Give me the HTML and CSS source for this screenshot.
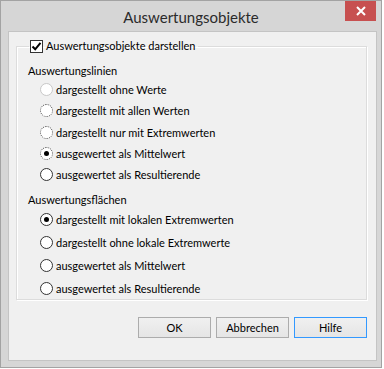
FILE: index.html
```html
<!DOCTYPE html>
<html lang="de">
<head>
  <meta charset="UTF-8">
  <title>Auswertungsobjekte</title>
  <link rel="stylesheet" href="styles.css">
</head>
<body>
  <div class="window">
    <div class="titlebar">
      <span></span>
      <span class="title">Auswertungsobjekte</span>
      <span class="close">
        <svg width="10" height="10" viewBox="0 0 10 10"><path d="M1 1 L9 9 M9 1 L1 9" stroke="#fff" stroke-width="2"/></svg>
      </span>
    </div>

    <div class="client">
      <fieldset class="group">
        <legend>
          <span class="check">
            <svg width="11" height="11" viewBox="0 0 11 11"><path d="M1.5 5.5 L4.2 8.3 L9.5 1.8" fill="none" stroke="#000" stroke-width="2"/></svg>
          </span>
          Auswertungsobjekte darstellen
        </legend>

        <div class="heading">Auswertungslinien</div>
        <ul class="options lines">
          <li><span class="radio faded"></span>dargestellt ohne Werte</li>
          <li><span class="radio dotted"></span>dargestellt mit allen Werten</li>
          <li><span class="radio dotted"></span>dargestellt nur mit Extremwerten</li>
          <li><span class="radio dotted on"></span>ausgewertet als Mittelwert</li>
          <li><span class="radio"></span>ausgewertet als Resultierende</li>
        </ul>

        <div class="heading second">Auswertungsflächen</div>
        <ul class="options areas">
          <li><span class="radio on"></span>dargestellt mit lokalen Extremwerten</li>
          <li><span class="radio"></span>dargestellt ohne lokale Extremwerte</li>
          <li><span class="radio"></span>ausgewertet als Mittelwert</li>
          <li><span class="radio"></span>ausgewertet als Resultierende</li>
        </ul>
      </fieldset>

      <div class="buttons">
        <button>OK</button>
        <button>Abbrechen</button>
        <button class="default">Hilfe</button>
      </div>
    </div>
  </div>
</body>
</html>
```

FILE: styles.css
```css
body {
  margin: 0;
  background: #ffffff;
  font-family: Lato, "Open Sans", sans-serif;
  font-size: 11px;
  color: #000;
}

/* window frame */
.window {
  border: 1px solid #a3a3a3;
  background: #d6d6d6;
  padding: 0 4px 6px 7px;
  width: 369px;
  height: 360px;
}

.titlebar {
  height: 30px;
  display: grid;
  grid-template-columns: 1fr auto 1fr;
  align-items: start;
  margin-left: -7px;
  margin-right: -4px;
}
.title {
  font-size: 15px;
  color: #2b2b2b;
  line-height: 32px;
}
.close {
  justify-self: end;
  margin-right: 5px;
  width: 31px;
  height: 20px;
  background: #c75050;
  display: flex;
  align-items: center;
  justify-content: center;
}

/* client area */
.client {
  background: #f0f0f0;
  border: 1px solid #c4c4c4;
  height: 328px;
  padding: 0 9px 0 7px;
  display: flex;
  flex-direction: column;
}

.group {
  margin: 6px 0 0 0;
  padding: 0 0 14px 11px;
  border: 1px solid #dcdcdc;
  box-shadow: inset 1px 1px 0 #fff, 1px 1px 0 #fff;
  height: 262px;
  box-sizing: border-box;
}
.group legend {
  padding: 0 3px 0 1px;
  margin-left: 1px;
  line-height: 16px;
  display: flex;
  align-items: center;
}
.check {
  width: 11px;
  height: 11px;
  border: 1px solid #333;
  background: #fff;
  margin-right: 3px;
  display: inline-flex;
}

.heading {
  line-height: 17px;
  margin-top: 8px;
}
.heading.second {
  margin-top: 6px;
}

.options {
  list-style: none;
  margin: 0;
  padding: 0 0 0 12px;
}
.options li {
  display: flex;
  align-items: center;
  height: 21.3px;
}
.options.areas li {
  height: 23px;
}

.radio {
  width: 11px;
  height: 11px;
  border-radius: 50%;
  border: 1px solid #333;
  background: #fff;
  margin-right: 3px;
  box-sizing: content-box;
  position: relative;
}
.radio.faded {
  border-color: #c8c8c8;
}
.radio.dotted {
  border: 1px dotted #444;
}
.radio.on::after {
  content: "";
  position: absolute;
  left: 3px;
  top: 3px;
  width: 5px;
  height: 5px;
  border-radius: 50%;
  background: #000;
}

/* dialog buttons */
.buttons {
  display: flex;
  justify-content: flex-end;
  gap: 5px;
  margin-top: 17px;
}
.buttons button {
  width: 73px;
  height: 21px;
  border: 1px solid #acacac;
  background: linear-gradient(#f0f0f0, #e5e5e5);
  font-family: inherit;
  font-size: 11px;
  padding: 0;
  color: #000;
}
.buttons button.default {
  border-color: #3399ff;
}
```
